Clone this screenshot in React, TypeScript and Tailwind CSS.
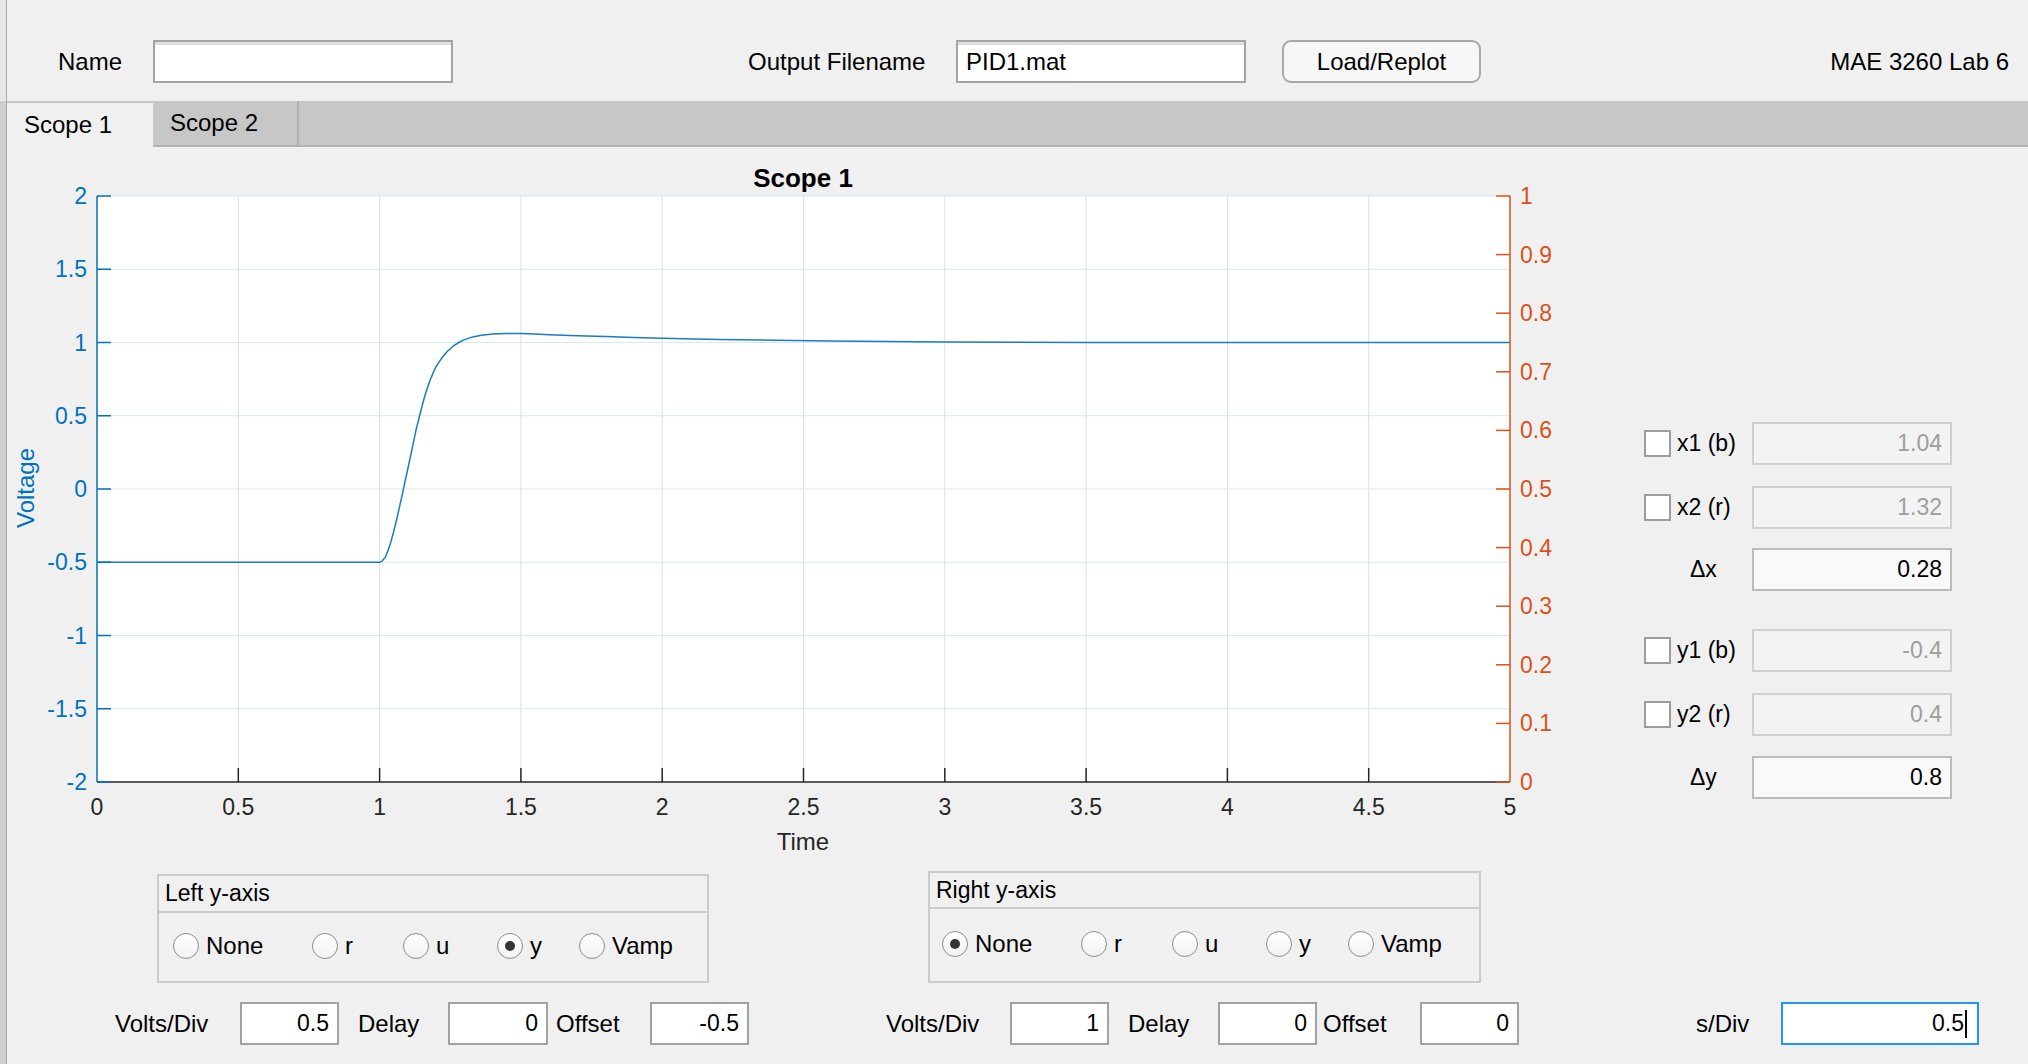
import React from "react";

const X0 = 97;
const X_UNIT = 282.6;
const Y_ZERO = 489;
const Y_UNIT = 146.5;

const toX = (t: number) => X0 + t * X_UNIT;
const toY = (v: number) => Y_ZERO - v * Y_UNIT;

// step response samples, (time, volts)
const samples: [number, number][] = [
  [0, -0.5], [1.0, -0.5], [1.01, -0.49], [1.02, -0.465], [1.03, -0.42], [1.04, -0.36],
  [1.05, -0.29], [1.06, -0.21], [1.07, -0.125], [1.08, -0.04], [1.09, 0.05], [1.1, 0.14],
  [1.11, 0.23], [1.12, 0.32], [1.13, 0.41], [1.14, 0.49], [1.15, 0.565], [1.16, 0.635],
  [1.17, 0.695], [1.18, 0.75], [1.19, 0.795], [1.2, 0.835], [1.22, 0.895], [1.24, 0.94],
  [1.26, 0.975], [1.28, 1.0], [1.3, 1.02], [1.33, 1.038], [1.36, 1.05], [1.4, 1.058],
  [1.45, 1.062], [1.5, 1.061], [1.55, 1.057], [1.6, 1.053], [1.7, 1.046], [1.8, 1.04],
  [1.9, 1.034], [2.0, 1.029], [2.2, 1.021], [2.4, 1.015], [2.6, 1.01], [2.8, 1.006],
  [3.0, 1.003], [3.5, 1.001], [4.0, 1.0], [5.0, 1.0],
];

const curvePath = samples
  .map(([t, v], i) => `${i ? "L" : "M"}${toX(t).toFixed(1)},${toY(v).toFixed(1)}`)
  .join(" ");

const xLabels = ["0", "0.5", "1", "1.5", "2", "2.5", "3", "3.5", "4", "4.5", "5"];
const leftLabels = ["2", "1.5", "1", "0.5", "0", "-0.5", "-1", "-1.5", "-2"];
const rightLabels = ["1", "0.9", "0.8", "0.7", "0.6", "0.5", "0.4", "0.3", "0.2", "0.1", "0"];

const BLUE = "#0072BD";
const ORANGE = "#D95319";
const DARK = "#262626";

function ScopeChart() {
  const top = 196;
  const bottom = 782;
  const right = 1510;
  return (
    <svg width={1620} height={718} viewBox="7 147 1620 718" className="shrink-0">
      <text x={803} y={187} textAnchor="middle" fontSize={26} fontWeight="bold" fill="#000">
        Scope 1
      </text>
      <rect x={X0} y={top} width={right - X0} height={bottom - top} fill="#fff" />

      {/* grid */}
      {xLabels.slice(1, 10).map((_, i) => {
        const x = toX((i + 1) * 0.5);
        return <line key={"gx" + i} x1={x} x2={x} y1={top} y2={bottom} stroke="#dfdfdf" strokeWidth={1} />;
      })}
      {leftLabels.slice(0, 8).map((_, i) => {
        const y = top + i * 73.25;
        return <line key={"gy" + i} x1={X0} x2={right} y1={y} y2={y} stroke="#d6e8f5" strokeWidth={1} />;
      })}

      {/* data */}
      <path d={curvePath} fill="none" stroke="#1a7cc3" strokeWidth={1.5} strokeLinejoin="round" />

      {/* x axis */}
      <line x1={X0} x2={right} y1={bottom} y2={bottom} stroke={DARK} strokeWidth={1.5} />
      {xLabels.map((lab, i) => {
        const x = toX(i * 0.5);
        return (
          <g key={"xt" + i}>
            {i > 0 && i < 10 && <line x1={x} x2={x} y1={bottom} y2={bottom - 14} stroke={DARK} strokeWidth={1.5} />}
            <text x={x} y={815} textAnchor="middle" fontSize={23} fill={DARK}>
              {lab}
            </text>
          </g>
        );
      })}
      <text x={803} y={850} textAnchor="middle" fontSize={24} fill={DARK}>
        Time
      </text>

      {/* left axis */}
      <line x1={X0} x2={X0} y1={top} y2={bottom} stroke={BLUE} strokeWidth={1.5} />
      {leftLabels.map((lab, i) => {
        const y = top + i * 73.25;
        return (
          <g key={"yl" + i}>
            <line x1={X0} x2={X0 + 14} y1={y} y2={y} stroke={BLUE} strokeWidth={1.5} />
            <text x={87} y={y + 8} textAnchor="end" fontSize={23} fill={BLUE}>
              {lab}
            </text>
          </g>
        );
      })}
      <text x={34} y={488} textAnchor="middle" fontSize={24} fill={BLUE} transform="rotate(-90 34 488)">
        Voltage
      </text>

      {/* right axis */}
      <line x1={right} x2={right} y1={top} y2={bottom} stroke={ORANGE} strokeWidth={1.5} />
      {rightLabels.map((lab, i) => {
        const y = top + i * 58.6;
        return (
          <g key={"yr" + i}>
            <line x1={right - 14} x2={right} y1={y} y2={y} stroke={ORANGE} strokeWidth={1.5} />
            <text x={1520} y={y + 8} textAnchor="start" fontSize={23} fill={ORANGE}>
              {lab}
            </text>
          </g>
        );
      })}
    </svg>
  );
}

function Field({ value, className }: { value: string; className: string }) {
  return (
    <div className={"flex h-[43px] items-center justify-end border-2 pr-[8px] text-[23px] " + className}>
      {value}
    </div>
  );
}

function Check({ label }: { label: string }) {
  return (
    <div className="flex w-[108px] items-center">
      <div className="h-[27px] w-[27px] border-2 border-[#9d9d9d] bg-white" />
      <span className="ml-[6px] text-[23px]">{label}</span>
    </div>
  );
}

function CursorPanel() {
  const off = "w-[200px] border-[#d0d0d0] bg-[#f3f3f3] text-[#9e9e9e]";
  const on = "w-[200px] border-[#bcbcbc] bg-[#f9f9f9] text-black";
  return (
    <div className="ml-[17px] flex flex-col pt-[275px]">
      <div className="flex h-[43px] items-center">
        <Check label="x1 (b)" />
        <Field value="1.04" className={off} />
      </div>
      <div className="mt-[21px] flex h-[43px] items-center">
        <Check label="x2 (r)" />
        <Field value="1.32" className={off} />
      </div>
      <div className="mt-[19px] flex h-[43px] items-center">
        <div className="w-[108px] pl-[46px] text-[23px]">Δx</div>
        <Field value="0.28" className={on} />
      </div>
      <div className="mt-[38px] flex h-[43px] items-center">
        <Check label="y1 (b)" />
        <Field value="-0.4" className={off} />
      </div>
      <div className="mt-[21px] flex h-[43px] items-center">
        <Check label="y2 (r)" />
        <Field value="0.4" className={off} />
      </div>
      <div className="mt-[20px] flex h-[43px] items-center">
        <div className="w-[108px] pl-[46px] text-[23px]">Δy</div>
        <Field value="0.8" className={on} />
      </div>
    </div>
  );
}

function Radio({ label, checked, width }: { label: string; checked?: boolean; width: string }) {
  return (
    <div className={"flex h-[26px] items-center " + width}>
      <div className="flex h-[26px] w-[26px] items-center justify-center rounded-full border-[1.5px] border-[#8e8e8e] bg-gradient-to-b from-white to-[#f2f2f2]">
        {checked && <div className="h-[10px] w-[10px] rounded-full bg-[#353535]" />}
      </div>
      <span className="ml-[7px] text-[24px] leading-none">{label}</span>
    </div>
  );
}

function AxisGroup({ title, selected, left }: { title: string; selected: string; left?: boolean }) {
  const opts = [
    { label: "None", w: "w-[139px]" },
    { label: "r", w: "w-[91px]" },
    { label: "u", w: "w-[94px]" },
    { label: "y", w: "w-[82px]" },
    { label: "Vamp", w: "" },
  ];
  return (
    <div
      className={
        "border-2 border-[#cbcbcb] " +
        (left ? "ml-[150px] mt-[9px] h-[109px] w-[552px]" : "ml-[219px] mt-[6px] h-[112px] w-[553px]")
      }
    >
      <div
        className={
          "flex items-center border-b-2 border-[#cbcbcb] pl-[6px] text-[23px] " + (left ? "h-[37px]" : "h-[36px]")
        }
      >
        {title}
      </div>
      <div className={"flex " + (left ? "pl-[14px] pt-[20px]" : "pl-[12px] pt-[22px]")}>
        {opts.map((o) => (
          <Radio key={o.label} label={o.label} width={o.w} checked={o.label === selected} />
        ))}
      </div>
    </div>
  );
}

function Box({ value, className }: { value: string; className: string }) {
  return (
    <div
      className={
        "flex h-[43px] items-center justify-end border-2 border-[#a2a2a2] bg-white pr-[8px] text-[23px] " + className
      }
    >
      {value}
    </div>
  );
}

export default function App() {
  return (
    <div className="flex h-[1064px] w-[2028px] overflow-hidden bg-[#f0f0f0] font-['Liberation_Sans',Arial,sans-serif] text-black">
      {/* window edge behind */}
      <div className="flex w-[7px] shrink-0 flex-col border-r border-[#a9a9a9]">
        <div className="h-[101px] bg-[#e6e6e6]" />
        <div className="flex-1 bg-[#cfcfcf]" />
      </div>

      <div className="flex flex-1 flex-col">
        {/* top bar */}
        <div className="flex h-[101px] items-start pt-[40px]">
          <div className="ml-[51px] flex h-[43px] w-[65px] items-center text-[24px]">Name</div>
          <div className="ml-[30px] h-[43px] w-[300px] border-2 border-[#a3a3a3] bg-white shadow-[inset_0_3px_0_#dedede]" />
          <div className="ml-[295px] flex h-[43px] w-[178px] items-center text-[24px]">Output Filename</div>
          <div className="ml-[30px] flex h-[43px] w-[290px] items-center border-2 border-[#a3a3a3] bg-white pl-[8px] text-[24px] shadow-[inset_0_3px_0_#dedede]">
            PID1.mat
          </div>
          <div className="ml-[36px] flex h-[43px] w-[199px] items-center justify-center rounded-[9px] border-2 border-[#a8a8a8] bg-[#f7f7f7] text-[24px]">
            Load/Replot
          </div>
          <div className="ml-auto mr-[19px] flex h-[43px] items-center text-[24px]">MAE 3260 Lab 6</div>
        </div>

        {/* tabs */}
        <div className="flex h-[46px] bg-[#c7c7c7]">
          <div className="mt-[2px] flex w-[146px] items-center bg-[#f0f0f0] pl-[17px] text-[24px]">Scope 1</div>
          <div className="flex w-[146px] items-center border-b-2 border-r-2 border-[#b2b2b2] pl-[17px] text-[24px]">
            Scope 2
          </div>
          <div className="flex-1 border-b-2 border-[#b2b2b2]" />
        </div>

        {/* chart + cursors */}
        <div className="flex h-[718px]">
          <ScopeChart />
          <CursorPanel />
        </div>

        {/* axis selectors */}
        <div className="flex h-[118px] items-start">
          <AxisGroup title="Left y-axis" selected="y" left />
          <AxisGroup title="Right y-axis" selected="None" />
        </div>

        {/* scale controls */}
        <div className="mt-[19px] flex h-[43px] items-center text-[24px]">
          <div className="ml-[108px] w-[95px]">Volts/Div</div>
          <Box value="0.5" className="ml-[30px] w-[99px]" />
          <div className="ml-[19px] w-[60px]">Delay</div>
          <Box value="0" className="ml-[30px] w-[100px]" />
          <div className="ml-[8px] w-[64px]">Offset</div>
          <Box value="-0.5" className="ml-[30px] w-[99px]" />

          <div className="ml-[137px] w-[95px]">Volts/Div</div>
          <Box value="1" className="ml-[29px] w-[99px]" />
          <div className="ml-[19px] w-[60px]">Delay</div>
          <Box value="0" className="ml-[30px] w-[99px]" />
          <div className="ml-[6px] w-[66px]">Offset</div>
          <Box value="0" className="ml-[31px] w-[99px]" />

          <div className="ml-[177px] w-[53px]">s/Div</div>
          <div className="ml-[32px] flex h-[43px] w-[198px] items-center justify-end border-2 border-[#2196f3] bg-white pr-[10px] text-[23px]">
            0.5
            <span className="ml-[1px] h-[28px] w-[2px] bg-black" />
          </div>
        </div>
      </div>
    </div>
  );
}
